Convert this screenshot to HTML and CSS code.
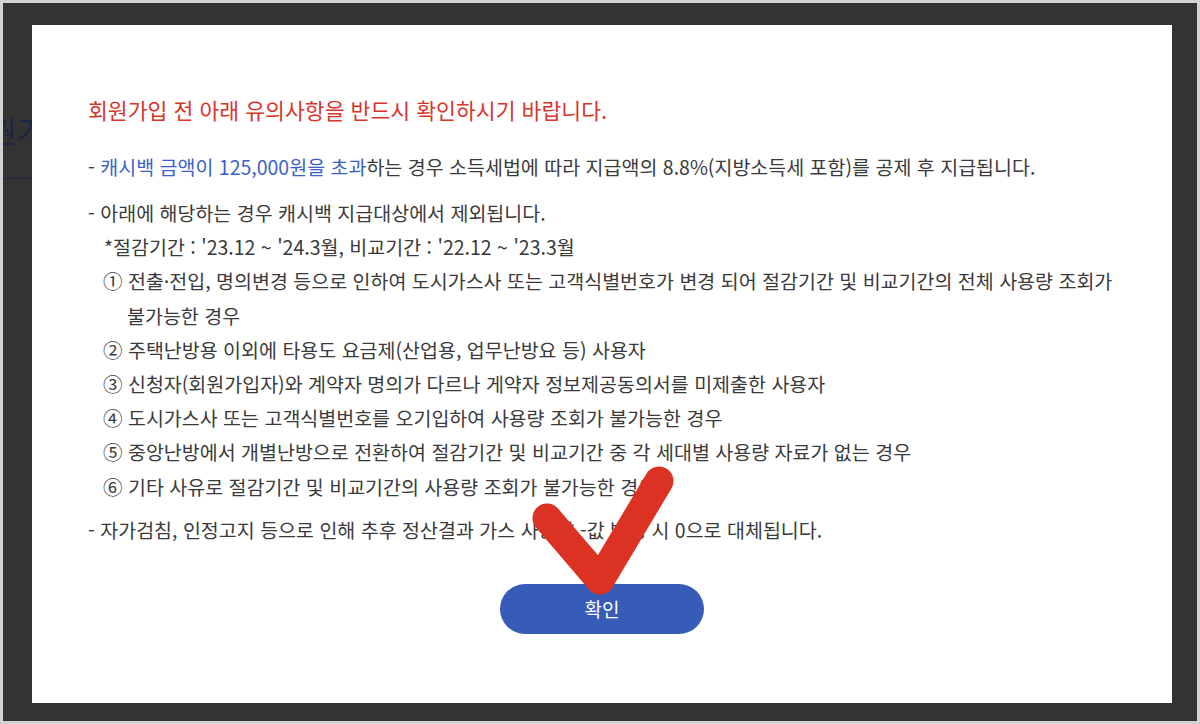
FILE: index.html
```html
<!DOCTYPE html>
<html lang="ko">
<head>
<meta charset="utf-8">
<title>회원가입 유의사항</title>
<link rel="stylesheet" href="styles.css">
</head>
<body>
<div class="frame">
  <div class="ghost">
    <div class="ghost-title">원가</div>
    <div class="ghost-line"></div>
  </div>
  <div class="modal">
    <h2 class="title">회원가입 전 아래 유의사항을 반드시 확인하시기 바랍니다.</h2>
    <p class="para first">- <span class="blue">캐시백 금액이 125,000원을 초과</span>하는 경우 소득세법에 따라 지급액의 8.8%(지방소득세 포함)를 공제 후 지급됩니다.</p>
    <div class="para block">
      <p class="line">- 아래에 해당하는 경우 캐시백 지급대상에서 제외됩니다.</p>
      <p class="line note">*절감기간 : '23.12 ~ '24.3월, 비교기간 : '22.12 ~ '23.3월</p>
      <ol class="items">
        <li>① 전출·전입, 명의변경 등으로 인하여 도시가스사 또는 고객식별번호가 변경 되어 절감기간 및 비교기간의 전체 사용량 조회가 불가능한 경우</li>
        <li>② 주택난방용 이외에 타용도 요금제(산업용, 업무난방요 등) 사용자</li>
        <li>③ 신청자(회원가입자)와 계약자 명의가 다르나 게약자 정보제공동의서를 미제출한 사용자</li>
        <li>④ 도시가스사 또는 고객식별번호를 오기입하여 사용량 조회가 불가능한 경우</li>
        <li>⑤ 중앙난방에서 개별난방으로 전환하여 절감기간 및 비교기간 중 각 세대별 사용량 자료가 없는 경우</li>
        <li>⑥ 기타 사유로 절감기간 및 비교기간의 사용량 조회가 불가능한 경우</li>
      </ol>
    </div>
    <p class="para last">- 자가검침, 인정고지 등으로 인해 추후 정산결과 가스 사용량 -값 발생 시 0으로 대체됩니다.</p>
    <div class="actions">
      <button class="btn" type="button">확인</button>
    </div>
    <svg class="check" viewBox="0 0 1140 678" width="1140" height="678" aria-hidden="true">
      <polyline points="515,493 568,555 627,456" fill="none" stroke="#dc3224" stroke-width="29" stroke-linecap="round" stroke-linejoin="round"/>
    </svg>
  </div>
</div>
</body>
</html>
```
FILE: styles.css
```css
html, body {
  margin: 0;
  padding: 0;
}
body {
  background: #d2d2d2;
  font-family: "Noto Sans CJK KR", "Noto Sans", sans-serif;
  width: 1200px;
  height: 724px;
  overflow: hidden;
}
.frame {
  margin: 3px;
  width: 1194px;
  height: 718px;
  background: #333333;
  display: flex;
  align-items: flex-start;
}
.ghost {
  width: 29px;
  flex: none;
  overflow: hidden;
  padding-top: 106px;
}
.ghost-title {
  font-size: 30px;
  line-height: 40px;
  color: #1c2545;
  white-space: nowrap;
  margin-left: -14px;
}
.ghost-line {
  margin-top: 29px;
  height: 1px;
  background: #1c2545;
}
.modal {
  position: relative;
  width: 1140px;
  height: 678px;
  margin-top: 22px;
  box-sizing: border-box;
  background: #ffffff;
  padding: 70px 30px 0 56px;
  color: #3a3a3a;
  font-size: 19.5px;
  word-break: keep-all;
}
.title {
  margin: 0 0 25px;
  font-size: 21.6px;
  line-height: 30px;
  font-weight: 400;
  color: #d7352a;
}
.para {
  margin: 0;
  line-height: 34px;
}
.blue {
  color: #3a62c6;
}
.block {
  margin-top: 12px;
  line-height: 34.2px;
}
.line {
  margin: 0;
}
.note {
  padding-left: 16px;
}
.items {
  list-style: none;
  margin: 0;
  padding: 0 0 0 39px;
}
.items li {
  text-indent: -24px;
}
.last {
  margin-top: 9px;
}
.actions {
  display: flex;
  justify-content: center;
  margin-top: 37px;
  margin-right: 26px;
}
.btn {
  width: 204px;
  height: 50px;
  border: none;
  border-radius: 25px;
  background: #375cb8;
  color: #ffffff;
  font-family: inherit;
  font-size: 19px;
  padding: 0;
}
.check {
  position: absolute;
  left: 0;
  top: 0;
  pointer-events: none;
}
```
